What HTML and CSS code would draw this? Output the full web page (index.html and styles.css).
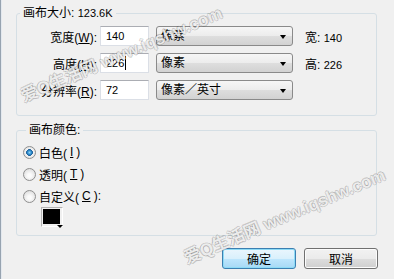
FILE: index.html
```html
<!DOCTYPE html>
<html lang="zh-CN">
<head>
    <meta charset="UTF-8">
    <meta name="viewport" content="width=device-width, initial-scale=1.0">
    <title>画布大小</title>
    <link rel="stylesheet" href="styles.css">
</head>
<body>
    <div class="window">
        <fieldset class="group size-group">
            <legend>画布大小: <span class="num">123.6K</span></legend>
            <div class="size-grid">
                <label class="lbl">宽度(<u>W</u>):</label>
                <span class="field"><span class="num">140</span></span>
                <span class="combo">像素<i class="arrow"></i></span>
                <span class="info">宽: <span class="num">140</span></span>

                <label class="lbl">高度(<u>H</u>):</label>
                <span class="field focused"><span class="num">226</span><i class="caret"></i></span>
                <span class="combo">像素<i class="arrow"></i></span>
                <span class="info">高: <span class="num">226</span></span>

                <label class="lbl">分辨率(<u>R</u>):</label>
                <span class="field"><span class="num">72</span></span>
                <span class="combo">像素／英寸<i class="arrow"></i></span>
                <span></span>
            </div>
        </fieldset>

        <fieldset class="group color-group">
            <legend>画布颜色:</legend>
            <div class="radio checked"><i class="dot"></i>白色(<u>I</u>)</div>
            <div class="radio"><i class="dot"></i>透明(<u>T</u>)</div>
            <div class="radio"><i class="dot"></i>自定义(<u>C</u>):</div>
            <span class="swatch"></span>
        </fieldset>

        <div class="buttons">
            <button class="btn default">确定</button>
            <button class="btn">取消</button>
        </div>

        <div class="watermark wm1">爱Q生活网 www.iqshw.com</div>
        <div class="watermark wm2">爱Q生活网 www.iqshw.com</div>
    </div>
</body>
</html>
```

FILE: styles.css
```css
body {
    margin: 0;
    background: #f0f0f0;
    font-family: "Liberation Sans", "Noto Sans CJK SC", sans-serif;
    font-size: 12px;
    color: #000;
}
.window {
    position: relative;
    width: 394px;
    height: 279px;
    box-sizing: border-box;
    padding-top: 6px;
    border-left: 1px solid #97a3b0;
    box-shadow: inset 1px 0 #e3e8ee;
    overflow: hidden;
}
u {
    text-decoration: underline;
}
.num {
    font-size: 11px;
}
.group {
    width: 361px;
    box-sizing: border-box;
    margin: 0 0 0 15px;
    border: 1px solid #d5dfe5;
    border-radius: 3px;
}
.group legend {
    margin-left: 3px;
    padding: 0 3px;
    line-height: 14px;
    height: 14px;
}
.size-group {
    padding: 6px 0 15px 0;
}
.size-grid {
    display: grid;
    grid-template-columns: 83px 56px 149px auto;
    grid-auto-rows: 20px;
    row-gap: 7px;
    align-items: center;
}
.lbl {
    text-align: right;
    margin-right: 3px;
}
.field {
    height: 20px;
    box-sizing: border-box;
    border: 1px solid #dbdfe6;
    border-top-color: #abadb3;
    background: #fff;
    padding-left: 5px;
    margin-right: 7px;
    display: flex;
    align-items: center;
}
.caret {
    display: inline-block;
    width: 1px;
    height: 14px;
    background: #000;
    margin-left: 1px;
}
.combo {
    position: relative;
    height: 20px;
    box-sizing: border-box;
    margin-right: 12px;
    border: 1px solid #8a8a8a;
    border-radius: 3px;
    background: linear-gradient(#f6f6f6, #ececec 50%, #dedede 51%, #d2d2d2);
    padding-left: 4px;
    line-height: 18px;
}
.arrow {
    position: absolute;
    right: 6px;
    top: 8px;
    border-left: 3.5px solid transparent;
    border-right: 3.5px solid transparent;
    border-top: 4px solid #000;
}
.color-group {
    margin-top: 7px;
    padding: 4px 0 8px 6px;
}
.radio {
    display: flex;
    align-items: center;
    height: 22px;
    gap: 3px;
}
.dot {
    width: 13px;
    height: 13px;
    box-sizing: border-box;
    border-radius: 50%;
    border: 1px solid #8f8f8f;
    background: radial-gradient(circle at 50% 60%, #fbfbfb 20%, #d9d9d9 90%);
}
.checked .dot {
    background: radial-gradient(circle, #8fd3f6 0, #2d8ccd 25%, #1a5c96 40%, #f3f3f3 45%, #dcdcdc 90%);
}
.swatch {
    position: relative;
    display: block;
    margin: 0 0 0 18px;
    width: 22px;
    height: 20px;
    box-sizing: border-box;
    border: 1px solid #b4b4b4;
    border-right-color: #fff;
    border-bottom-color: #fff;
    padding: 1px 2px 2px 1px;
    background: #000 content-box;
}
.swatch::after {
    content: "";
    position: absolute;
    right: -1px;
    bottom: -2px;
    border-left: 3px solid transparent;
    border-right: 3px solid transparent;
    border-top: 3px solid #000;
}
.buttons {
    display: flex;
    justify-content: flex-end;
    gap: 8px;
    margin: 12px 16px 0 0;
}
.btn {
    width: 74px;
    height: 21px;
    padding: 0;
    font: inherit;
    border: 1px solid #707070;
    border-radius: 3px;
    background: linear-gradient(#f2f2f2, #ebebeb 50%, #dddddd 51%, #cfcfcf);
    box-shadow: inset 0 0 0 1px #fcfcfc;
}
.btn.default {
    border-color: #3c7fb1;
    background: linear-gradient(#eaf6fd, #d9f0fc 50%, #bee6fd 51%, #a7d9f5);
    box-shadow: inset 0 0 0 1px #8ddbf6;
}
.watermark {
    position: absolute;
    width: 220px;
    text-align: center;
    font-size: 17px;
    font-weight: bold;
    line-height: 20px;
    white-space: nowrap;
    color: rgba(255, 255, 255, 0.85);
    text-shadow: 1px 0 rgba(0, 0, 0, 0.18), -1px 0 rgba(0, 0, 0, 0.18),
        0 1px rgba(0, 0, 0, 0.18), 0 -1px rgba(0, 0, 0, 0.18);
    transform: rotate(-23deg);
}
.wm1 {
    left: 11px;
    top: 45px;
}
.wm2 {
    left: 174px;
    top: 207px;
}
```
